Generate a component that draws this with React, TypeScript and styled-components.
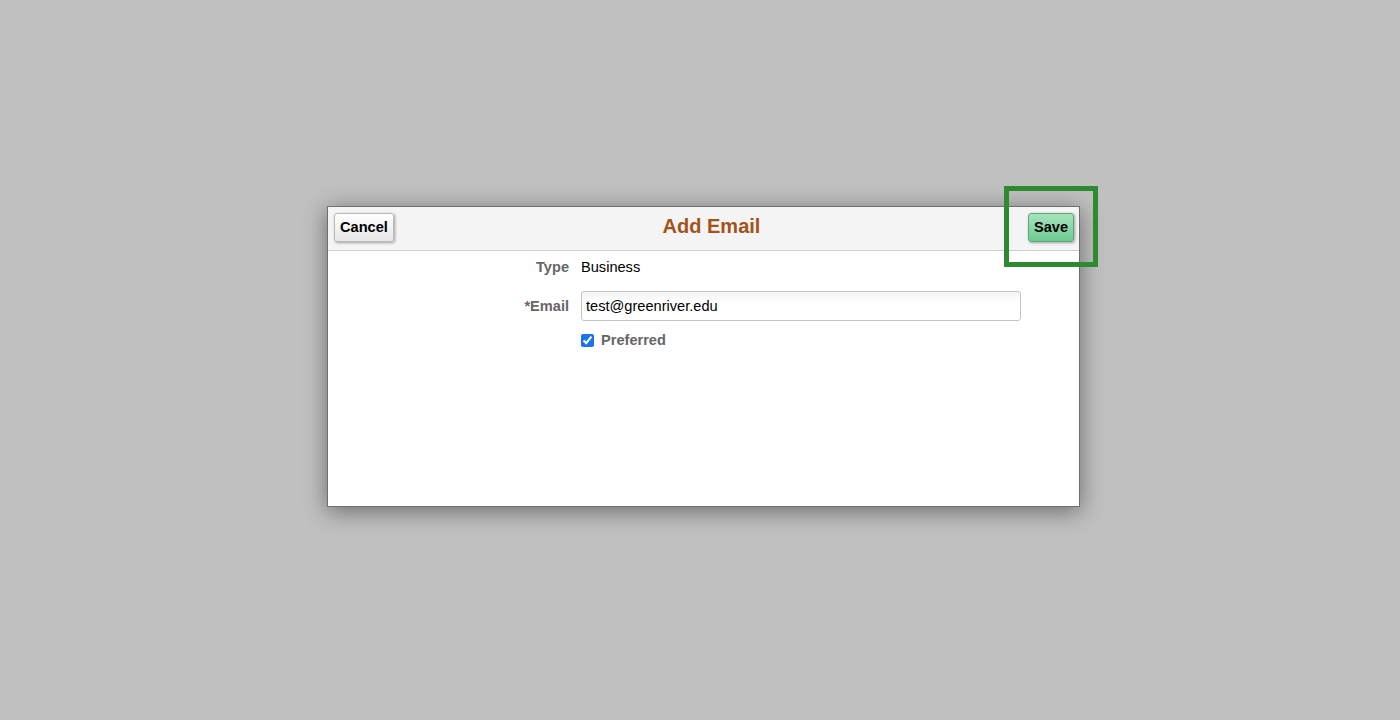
import React from 'react'
import styled, { createGlobalStyle } from 'styled-components'

const GlobalStyle = createGlobalStyle`
    html, body {
        margin: 0;
        padding: 0;
        background: #c0c0c0;
        font-family: "Liberation Sans", Arial, sans-serif;
    }
`

const Page = styled.div`
    width: 1400px;
    height: 720px;
    box-sizing: border-box;
    padding: 206px 0 0 327px;
`

const Dialog = styled.div`
    width: 753px;
    height: 301px;
    box-sizing: border-box;
    background: #ffffff;
    border: 1px solid #6f6f6f;
    box-shadow: 0 4px 22px rgba(0, 0, 0, 0.45);
    display: flex;
    flex-direction: column;
`

const Header = styled.div`
    position: relative;
    height: 44px;
    box-sizing: border-box;
    background: #f4f4f4;
    border-bottom: 1px solid #cfcfcf;
    display: flex;
    align-items: flex-start;
    justify-content: space-between;
    padding: 6px 6px 0;
`

const Title = styled.h1`
    position: absolute;
    left: 0;
    right: 0;
    top: 0;
    bottom: 0;
    margin: 0;
    padding: 0 0 5px 16px;
    display: flex;
    align-items: center;
    justify-content: center;
    font-size: 20px;
    font-weight: bold;
    color: #a3531a;
    pointer-events: none;
`

const Button = styled.button<{ $primary?: boolean }>`
    position: relative;
    z-index: 1;
    height: 29px;
    padding: 0 5px 2px;
    font-family: "Liberation Sans", Arial, sans-serif;
    font-size: 14.6px;
    line-height: 14px;
    font-weight: bold;
    color: #000;
    border-radius: 3px;
    border: 1px solid ${p => (p.$primary ? '#5aa878' : '#b9b9b9')};
    background: ${p =>
        p.$primary
            ? 'linear-gradient(#a6e3bd, #6fcb92)'
            : 'linear-gradient(#ffffff, #e6e6e6)'};
    box-shadow: 1px 1px 3px rgba(0, 0, 0, 0.35);
    cursor: pointer;
`

const Highlight = styled.div`
    position: absolute;
    right: -19px;
    top: -21px;
    width: 94px;
    height: 81px;
    box-sizing: border-box;
    border: 5px solid #2e8a2e;
    display: flex;
    align-items: flex-start;
    justify-content: center;
    padding: 22px 0 0 0;
`

const Form = styled.div`
    display: grid;
    grid-template-columns: 241px 440px;
    column-gap: 12px;
    row-gap: 0;
`

const Label = styled.div`
    text-align: right;
    font-size: 14.6px;
    font-weight: bold;
    color: #666666;
    display: flex;
    align-items: center;
    justify-content: flex-end;
`

const Value = styled.div<{ $h?: number }>`
    height: ${p => p.$h || 32}px;
    display: flex;
    align-items: center;
    font-size: 14.6px;
    color: #000;
`

const Input = styled.input`
    width: 440px;
    height: 30px;
    box-sizing: border-box;
    border: 1px solid #c4c4c4;
    border-radius: 3px;
    padding: 0 4px;
    font-family: "Liberation Sans", Arial, sans-serif;
    font-size: 14.6px;
    color: #000;
    background: linear-gradient(#f4f4f4, #ffffff 40%);
`

const CheckLabel = styled.label`
    display: flex;
    align-items: center;
    gap: 7px;
    font-size: 14.6px;
    font-weight: bold;
    color: #666666;
`

const Check = styled.input`
    width: 13px;
    height: 13px;
    margin: 0;
    accent-color: #1a73e8;
`

export default function App() {
    return (
        <>
            <GlobalStyle />
            <Page>
                <Dialog>
                    <Header>
                        <Button>Cancel</Button>
                        <Title>Add Email</Title>
                        <Highlight>
                            <Button $primary>Save</Button>
                        </Highlight>
                        <span style={{ width: 46 }} />
                    </Header>
                    <Form>
                        <Label>Type</Label>
                        <Value>Business</Value>
                        <Label>*Email</Label>
                        <Value $h={46}>
                            <Input defaultValue="test@greenriver.edu" />
                        </Value>
                        <span />
                        <Value $h={22}>
                            <CheckLabel>
                                <Check type="checkbox" defaultChecked />
                                Preferred
                            </CheckLabel>
                        </Value>
                    </Form>
                </Dialog>
            </Page>
        </>
    )
}
